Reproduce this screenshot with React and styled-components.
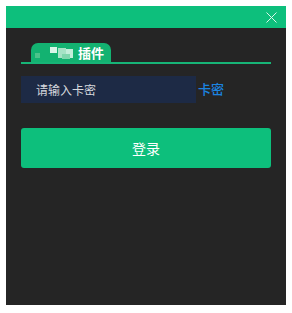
import React from 'react';
import styled, { createGlobalStyle } from 'styled-components';

const GlobalStyle = createGlobalStyle`
  body {
    margin: 0;
    background: #ffffff;
    font-family: "Noto Sans CJK SC", "Noto Sans", sans-serif;
  }
`;

// blurred logo blocks inside the tab
const mosaic = [
  [1, 9, 5, 5, '#4cc38a'],
  [16, 3, 7, 6, '#d8f5e8'],
  [24, 4, 8, 10, '#a6e3c6'],
  [32, 5, 7, 9, '#c4eedb'],
  [28, 10, 8, 5, '#7fd6ad'],
];

const App = () => {
  return <>
    <GlobalStyle />
    <Window>
      <TitleBar>
        <Close aria-label="close">
          <svg width="11" height="11" viewBox="0 0 11 11">
            <path d="M0.5 0.5 L10.5 10.5 M10.5 0.5 L0.5 10.5" stroke="#d9f7ea" strokeWidth="1" />
          </svg>
        </Close>
      </TitleBar>
      <Body>
        <TabBar>
          <Tab>
            <svg width="40" height="18" viewBox="0 0 40 18">
              {mosaic.map(([x, y, w, h, c], i) => <rect key={i} x={x} y={y} width={w} height={h} fill={c} />)}
            </svg>
            <TabText>插件</TabText>
          </Tab>
        </TabBar>
        <Row>
          <Input placeholder="请输入卡密" />
          <Label>卡密</Label>
        </Row>
        <LoginBtn>登录</LoginBtn>
      </Body>
    </Window>
  </>;
};

const Window = styled.div`
  margin: 6px;
  width: 280px;
  height: 299px;
  background: #252525;
  display: flex;
  flex-direction: column;
`

const TitleBar = styled.div`
  height: 22px;
  background: #0dbf7c;
  display: flex;
  justify-content: flex-end;
  align-items: center;
  padding-right: 9px;
`

const Close = styled.div`
  display: flex;
  align-items: center;
`

const Body = styled.div`
  padding: 15px 15px 0;
  display: flex;
  flex-direction: column;
`

const TabBar = styled.div`
  border-bottom: 2px solid #17b577;
  display: flex;
  padding-left: 10px;
`

const Tab = styled.div`
  width: 80px;
  height: 19px;
  background: #13b271;
  border-radius: 7px 7px 0 0;
  display: flex;
  align-items: center;
  padding-left: 3px;
  box-sizing: border-box;
`

const TabText = styled.span`
  color: #ffffff;
  font-size: 13px;
  font-weight: bold;
  margin-left: 4px;
`

const Row = styled.div`
  display: flex;
  align-items: center;
  margin-top: 12px;
`

const Input = styled.input`
  width: 175px;
  height: 27px;
  box-sizing: border-box;
  border: none;
  background: #1d2a45;
  color: #e0e0e0;
  padding: 0 15px;
  font-family: inherit;
  font-size: 12px;
  &::placeholder {
    color: #d6d9de;
  }
  &:focus-visible {
    outline: none;
  }
`

const Label = styled.span`
  color: #1b84e0;
  font-size: 13px;
  font-weight: 500;
  margin-left: 2px;
  margin-bottom: 3px;
`

const LoginBtn = styled.button`
  margin-top: 25px;
  width: 250px;
  height: 40px;
  border: none;
  border-radius: 3px;
  background: #0dbf7c;
  color: #ffffff;
  font-family: inherit;
  font-size: 14px;
  cursor: pointer;
`

export default App;
